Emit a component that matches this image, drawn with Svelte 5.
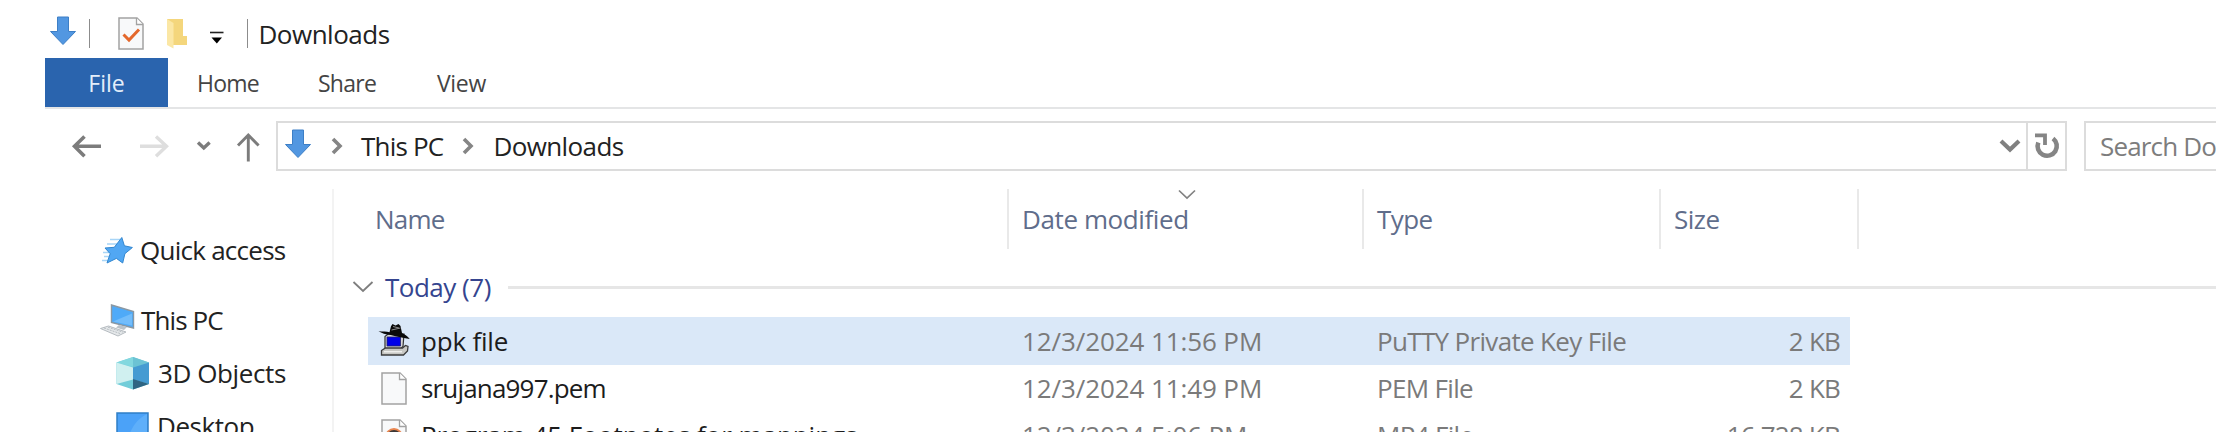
<script>
  const tabs = [
    { label: 'Home', cls: 'home' },
    { label: 'Share', cls: 'share' },
    { label: 'View', cls: 'view' }
  ];
  const files = [
    { icon: 'putty', name: 'ppk file', date: '12/3/2024 11:56 PM', type: 'PuTTY Private Key File', size: '2 KB', selected: true },
    { icon: 'doc', name: 'srujana997.pem', date: '12/3/2024 11:49 PM', type: 'PEM File', size: '2 KB' },
    { icon: 'video', name: 'Program 45 Footnotes for mappings', date: '12/3/2024 5:06 PM', type: 'MP4 File', size: '16,728 KB' }
  ];
</script>

{#snippet downArrow()}
  <svg class="down" width="28" height="30" viewBox="0 0 28 30"><path d="M8.5 1h11v14.5h7L14 28.5 1.5 15.500h7z" fill="#5297e1" stroke="#3d7fc6" /></svg>
{/snippet}

{#snippet page()}
  <path d="M1 1h18l6 6v25H1z" fill="#f8f9fa" stroke="#a2a2a2" stroke-width="1.5" />
  <path d="M18.500 1v6.500H25" fill="#fff" stroke="#a2a2a2" stroke-width="1.3" />
{/snippet}

{#snippet separator()}
  <svg class="sep" width="12" height="18" viewBox="0 0 12 18"><path d="M2 2l7 7-7 7" fill="none" stroke="#858585" stroke-width="3.600" /></svg>
{/snippet}

<div class="window">
  <header class="title">
    {@render downArrow()}
    <i class="rule r1"></i>
    <svg class="check" width="26" height="33" viewBox="0 0 26 33">{@render page()}<path d="M5.500 17.500l5.500 5.500L21 12.500" fill="none" stroke="#e4682c" stroke-width="3" /></svg>
    <svg class="folder" width="22" height="32" viewBox="0 0 22 32"><path d="M1 1h16v17h4v9H6z" fill="#f4d67c" /><path d="M1 1l6.500 4v25.500L1 27z" fill="#fbe7a5" /></svg>
    <svg class="menu" width="14" height="14" viewBox="0 0 14 14"><path d="M0 1.500h13.500" stroke="#222" stroke-width="1.600" /><path d="M1.500 6.500h10.500l-5.200 6z" fill="#000" /></svg>
    <i class="rule r2"></i>
    <span class="caption">Downloads</span>
  </header>

  <nav class="tabs">
    <span class="file">File</span>
    {#each tabs as t}<span class={t.cls}>{t.label}</span>{/each}
  </nav>

  <div class="location">
    <svg class="arrows" width="200" height="50" viewBox="65 121 200 50" fill="none">
      <path d="M101 146.300H74M84.500 136.500L74.500 146.300l10 10" stroke="#7c7c7c" stroke-width="3.600" />
      <path d="M140 146.300h27M156 136.500l10.500 9.800-10.500 10" stroke="#dedede" stroke-width="3.400" />
      <path d="M198 142.500l5.800 5.500 5.800-5.500" stroke="#7c7c7c" stroke-width="3.400" />
      <path d="M248.300 161.500V135M238 145.500l10.300-10.500 10.300 10.500" stroke="#7c7c7c" stroke-width="2.900" />
    </svg>
    <div class="address">
      {@render downArrow()}
      {@render separator()}
      <span class="crumb pc">This PC</span>
      {@render separator()}
      <span class="crumb dl">Downloads</span>
      <svg class="drop" width="22" height="16" viewBox="0 0 22 16"><path d="M2 3l9 8.500L20 3" fill="none" stroke="#808080" stroke-width="4.200" /></svg>
      <div class="refresh">
        <svg width="26" height="26" viewBox="0 0 26 26"><path d="M19 4.500A9.600 9.600 0 1 1 4.300 8.500" transform="translate(0 1)" fill="none" stroke="#858585" stroke-width="4.600" /><path d="M1 2.400h10v9.600" fill="none" stroke="#858585" stroke-width="3.800" /></svg>
      </div>
    </div>
    <div class="search">Search Downloads</div>
  </div>

  <main>
    <aside>
      <div class="node quick">
        <svg width="34" height="28" viewBox="99 236 34 28"><path d="M110 239.500h10M107 244h12M103 252.500h8M104 256.500h7M102 260.500h6" stroke="#a8d5f7" stroke-width="1.400" /><path d="M121.800 237.500l2.600 8.300 8 1.700-7.500 6.200-2.200 9.300-6.300-4.600-9.400 4.600 3.200-9.300-5.200-5.700 9.300-.7z" fill="#51a7f3" stroke="#3387cf" /></svg>
        <span>Quick access</span>
      </div>
      <div class="node thispc">
        <svg width="36" height="34" viewBox="98 304 36 34"><path d="M110.500 306l22 6.500v16.500l-22-5.500z" fill="#4faaf8" stroke="#8b98a3" stroke-width="1.400" /><path d="M112 322.500l19-8v12z" fill="#73bdfb" /><path d="M118 326l8 2-3 3-8-2.500z" fill="#bcc3c9" /><path d="M99.500 329.500l8-2.500 17.500 6-8 4z" fill="#e5e8ea" stroke="#b6bcc1" /><path d="M103 329l16 5.500M107 328.200l15 5" stroke="#aab1b6" stroke-width=".8" stroke-dasharray="2 1" /></svg>
        <span>This PC</span>
      </div>
      <div class="node objects">
        <svg width="34" height="34" viewBox="116 355 34 34"><path d="M133 356l16 5.500v21.500l-16 5.500-16.500-5.500v-21.500z" fill="#72cdd9" /><path d="M116.500 361.500l16.500-5.500v10z" fill="#83d8df" /><path d="M133 356l16 5.500-16 5z" fill="#6cc3d4" /><path d="M116.500 361.500l16.500 5v12l-16.500 4.500z" fill="#d0f0f0" /><path d="M149 361.500l-16 5v12l16 4.500z" fill="#459bd2" /><path d="M133 378l16 5-16 5.500z" fill="#2f6583" /></svg>
        <span>3D Objects</span>
      </div>
      <div class="node desktop">
        <svg width="34" height="28" viewBox="0 0 34 28"><path d="M1 1h31v26H1z" fill="#4ba2f8" stroke="#2f7fc6" stroke-width="1.500" /><path d="M31 2v24H12C17 12 22 7 31 2z" fill="#5eaffa" /></svg>
        <span>Desktop</span>
      </div>
    </aside>

    <section>
      <div class="cols">
        <span class="c-name">Name</span>
        <span class="c-date">Date modified<svg class="sort" width="18" height="11" viewBox="0 0 18 11"><path d="M1 1.500l8 7.500 8-7.500" fill="none" stroke="#828282" stroke-width="1.700" /></svg></span>
        <span class="c-type">Type</span>
        <span class="c-size">Size</span>
      </div>
      <div class="group">
        <svg width="22" height="14" viewBox="0 0 22 14"><path d="M1.500 2l9.500 9 9.500-9" fill="none" stroke="#7e7e7e" stroke-width="1.800" /></svg>
        <span>Today (7)</span>
        <i></i>
      </div>
      {#each files as f}
        <div class="row" class:selected={f.selected}>
          {#if f.icon === 'putty'}
            <svg width="34" height="36" viewBox="377 323 34 36"><path d="M385 336.500l3-2.500h16l-1 12.500-2.500 2.500H385z" fill="#d6d6d6" stroke="#333" stroke-width="1.200" /><path d="M387 337h13.500v9h-13.500z" fill="#0000e8" stroke="#22226a" stroke-width=".8" /><path d="M381.500 350.500l4-2.500h17l3-2.500 2.500 1-.5 4.500-4 4h-22z" fill="#c8c8c4" stroke="#3c3c3c" stroke-width="1.300" /><path d="M384 351.800h18" stroke="#fff" /><path d="M378.500 331.200c4 .3 8 .3 11 1l1.500-6 1.500-2.200 3 1.500 3-1.500 2 2 1.500 7c3 1.500 5.500 3 7.700 6-8-1.500-14-2.500-19-4-5-.6-9-1.800-12.200-3.800z" fill="#0a0a0a" /><path d="M391.500 330l9-2M393 326.500l6 1.500" stroke="#8a8a8a" /></svg>
          {:else}
            <svg width="34" height="36" viewBox="-4 -2 34 36">{@render page()}{#if f.icon === 'video'}<circle cx="13" cy="18" r="9" fill="#e8854f" /><circle cx="13" cy="18.500" r="7.500" fill="#3c3836" /><circle cx="13" cy="15" r="2" fill="#fff" />{/if}</svg>
          {/if}
          <span class="name {f.icon}">{f.name}</span>
          <span class="date">{f.date}</span>
          <span class="type">{f.type}</span>
          <span class="size">{f.size}</span>
        </div>
      {/each}
    </section>
  </main>
</div>

<style>
  :global(body) { margin: 0; background: #fff; overflow: hidden; }
  .window { width: 2216px; height: 432px; overflow: hidden; font: 26px/36px "Open Sans", "Noto Sans", sans-serif; letter-spacing: -.5px; color: #222; background: #fff; white-space: nowrap; }
  svg { display: block; flex: none; }
  .title { display: flex; align-items: center; height: 49px; padding: 9px 0 0 49px; }
  .rule { width: 1px; height: 29px; background: #8c8c8c; flex: none; }
  .title .down { margin-top: -5px; }
  .r1 { margin: 0 28px 0 12px; }
  .folder { margin-left: 22px; }
  .menu { margin: 9px 23px 0 22px; }
  .caption { margin-left: 10.500px; letter-spacing: -.5px; }
  .tabs { display: flex; height: 49px; margin-left: 45px; line-height: 50px; font-size: 23px; color: #444; border-bottom: 2px solid #e4e5e6; }
  .file { width: 123px; background: #2a64ae; color: #e4eefa; text-align: center; letter-spacing: 0; }
  .home { margin-left: 29px; width: 121px; letter-spacing: -.75px; }
  .share { width: 119px; letter-spacing: -.75px; }
  .view { letter-spacing: -.35px; }
  .location { display: flex; height: 49px; margin-top: 12px; }
  .arrows { margin-left: 65px; }
  .address { display: flex; align-items: center; box-sizing: border-box; width: 1791px; margin-left: 11px; height: 50px; border: 2px solid #dcdcdc; }
  .address .down { margin-left: 6px; margin-top: -4px; }
  .sep { margin-left: 19px; }
  .crumb { margin-left: 18px; }
  .pc { letter-spacing: -.8px; }
  .dl { margin-left: 19px; letter-spacing: -.6px; }
  .drop { margin-left: auto; margin-right: 5px; }
  .refresh { display: flex; align-items: center; justify-content: center; width: 39px; height: 100%; box-sizing: border-box; border-left: 2px solid #dcdcdc; }
  .search { box-sizing: border-box; flex: 1; height: 50px; margin-left: 17px; padding-left: 14px; line-height: 46px; border: 2px solid #dcdcdc; border-right: 0; color: #7d7d7d; letter-spacing: -.85px; overflow: hidden; }
  main { display: flex; margin-top: 19px; height: 250px; }
  aside { width: 332px; border-right: 2px solid #f3f3f3; flex: none; }
  .node { display: flex; align-items: center; height: 36px; gap: 7px; padding-left: 99px; }
  .quick { margin-top: 43px; letter-spacing: -.74px; }
  .thispc { margin-top: 34px; gap: 6px; letter-spacing: -.9px; }
  .objects { margin-top: 17px; padding-left: 116px; gap: 8px; letter-spacing: -.4px; }
  .desktop { margin-top: 17px; padding-left: 116px; letter-spacing: -.45px; }
  section { flex: 1; }
  .cols { display: flex; height: 60px; line-height: 60px; color: #5f6d8b; }
  .cols span { box-sizing: border-box; border-right: 2px solid #e9e9e9; padding-left: 13px; position: relative; }
  .cols .c-name { width: 675px; padding-left: 41px; letter-spacing: -.8px; }
  .c-date { width: 355px; letter-spacing: -.4px; }
  .c-type { width: 297px; letter-spacing: -.6px; }
  .c-size { width: 198px; }
  .sort { position: absolute; left: 169px; top: 0; }
  .group { display: flex; align-items: center; margin: 20px 0 12px 18px; color: #35458f; }
  .group span { margin-left: 11px; letter-spacing: -.5px; }
  .group i { flex: 1; height: 3px; background: #e6e6e6; margin-left: 17px; }
  .row { display: grid; grid-template-columns: 44px 601px 355px 297px 166px; align-items: center; box-sizing: border-box; width: 1482px; height: 47px; margin-left: 34px; padding-left: 9px; line-height: 47px; color: #7a7a7a; }
  .row span { padding-top: 1px; }
  .selected { background: #dae8f8; height: 48px; margin-bottom: -1px; }
  .name { color: #1c1c1c; }
  .name.putty { letter-spacing: -.2px; }
  .name.doc { letter-spacing: -.83px; }
  .name.video { letter-spacing: -.05px; }
  .date { letter-spacing: -.1px; }
  .type { letter-spacing: -.67px; }
  .size { text-align: right; letter-spacing: -.8px; }
</style>
